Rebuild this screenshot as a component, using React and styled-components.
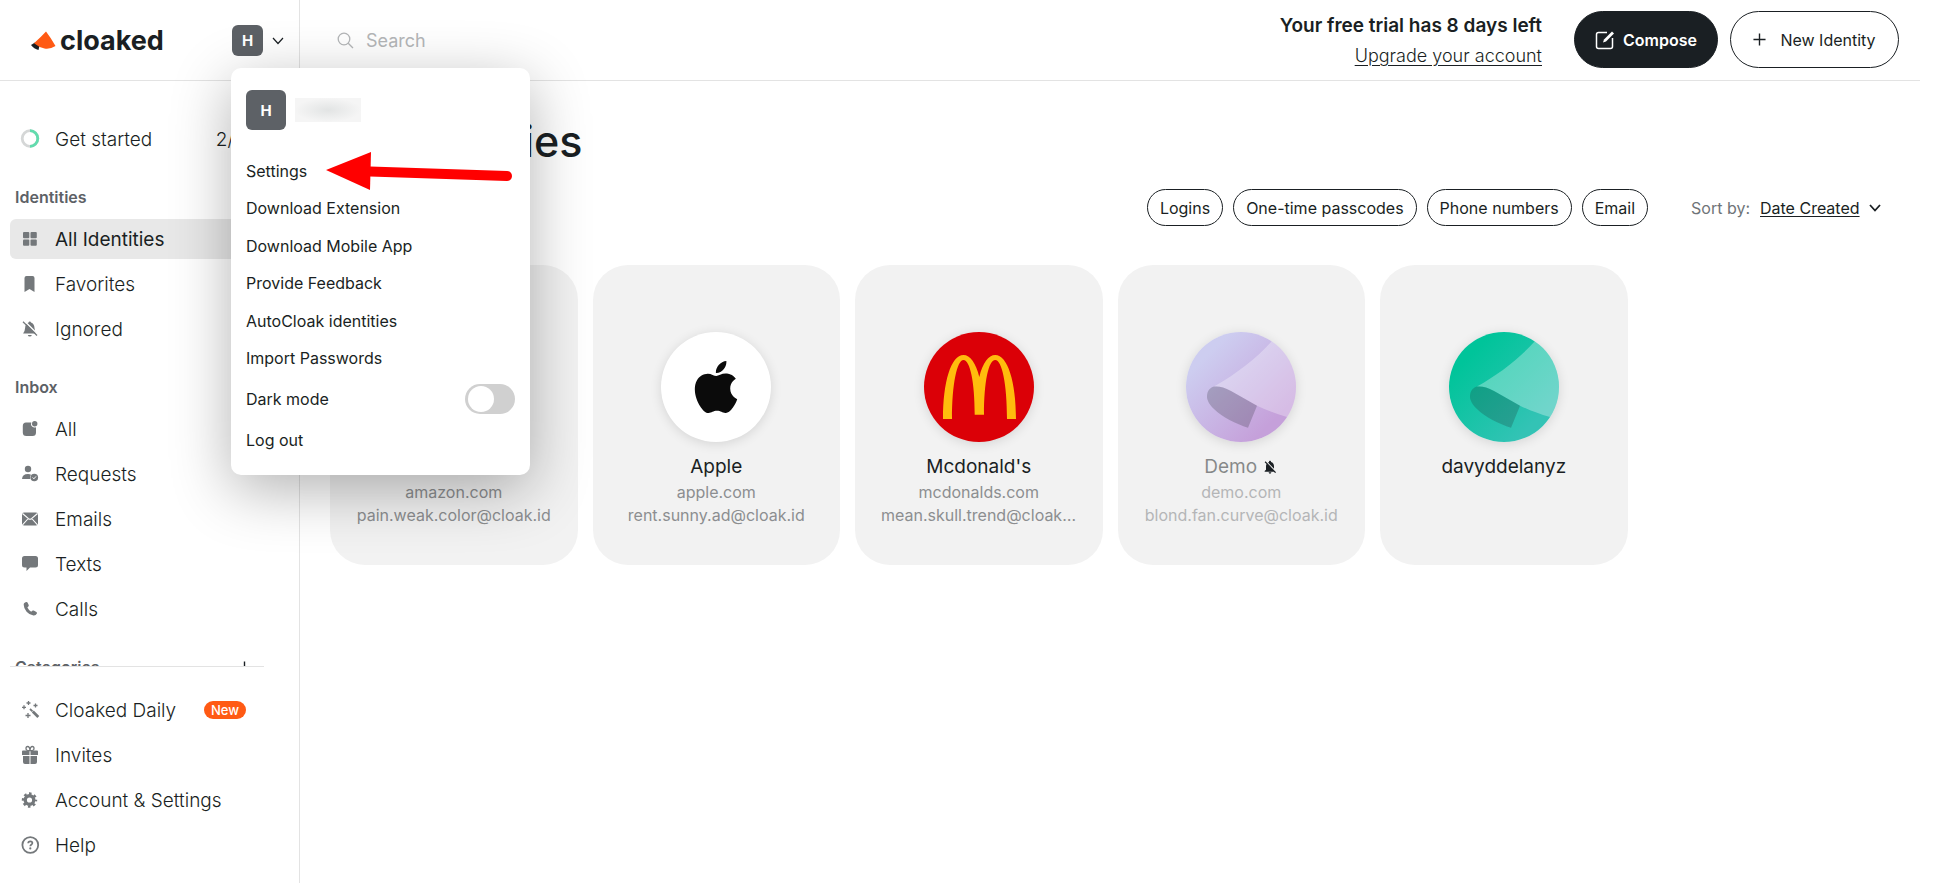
import { useState } from 'react';
import styled, { createGlobalStyle } from 'styled-components';
import { SiApple } from 'react-icons/si';
import { MdNotificationsOff } from 'react-icons/md';

const colors = {
  ink: '#1a1f23',
  gray: '#6f7478',
  line: '#e3e3e3',
  card: '#f2f2f2',
  orange: '#ff5a14',
  avatar: '#5d6166',
};

const GlobalStyle = createGlobalStyle`
  *, *::before, *::after {
    box-sizing: border-box;
  }

  body {
    margin: 0;
    background: #fff;
    color: ${colors.ink};
    font-family: Inter, "Open Sans", sans-serif;
  }

  button, input, select {
    font: inherit;
    color: inherit;
  }

  button {
    padding: 0;
    border: 0;
    background: none;
    cursor: pointer;
  }

  a {
    color: inherit;
    text-decoration: none;
  }
`;

const Page = styled.div`
  display: grid;
  grid-template-columns: 300px 1fr;
  height: calc(100vh - 11px);
  padding-right: 17px;
`;

/* sidebar */

const Sidebar = styled.aside`
  display: flex;
  flex-direction: column;
  min-height: 0;
  border-right: 1px solid ${colors.line};
`;

const SidebarHeader = styled.div`
  display: flex;
  flex: none;
  justify-content: space-between;
  height: 81px;
  padding: 25px 15px 0 31px;
  border-bottom: 1px solid ${colors.line};
`;

const Brand = styled.a`
  display: flex;
  align-items: center;
  gap: 4px;
  height: 32px;
  font-size: 27px;
  font-weight: 700;
  line-height: 32px;
`;

const Account = styled.div`
  position: relative;
`;

const AccountButton = styled.button`
  display: flex;
  align-items: center;
  gap: 9px;
`;

const Avatar = styled.span`
  display: grid;
  place-items: center;
  width: ${({ $size }) => $size}px;
  height: ${({ $size }) => $size}px;
  border-radius: 6px;
  background: ${colors.avatar};
  color: #fff;
  font-size: 15px;
  font-weight: 700;
`;

const SidebarScroll = styled.nav`
  flex: 1;
  min-height: 0;
  padding: 38px 35px 0 10px;
  overflow: hidden;
`;

const SidebarFooter = styled.nav`
  flex: none;
  margin: 0 35px 0 10px;
  padding: 23px 0 18px;
  border-top: 1px solid ${colors.line};
`;

const SectionTitle = styled.h2`
  display: flex;
  justify-content: space-between;
  align-items: center;
  height: 24px;
  margin: 26px 0 10px;
  padding: 0 13px 0 5px;
  color: ${colors.avatar};
  font-size: 16px;
  font-weight: 600;

  button {
    display: flex;
    color: ${colors.ink};
  }
`;

const NavList = styled.ul`
  display: grid;
  gap: 5px;
  margin: 0;
  padding: 0;
  list-style: none;
`;

const NavItem = styled.a`
  display: flex;
  align-items: center;
  gap: 15px;
  height: 40px;
  padding: 0 18px 0 10px;
  border-radius: 6px;
  background: ${({ $active }) => ($active ? '#e8e8e8' : 'transparent')};
  font-size: 19px;
  font-weight: ${({ $active }) => ($active ? 400 : 300)};
  white-space: nowrap;

  svg {
    flex: none;
    color: #74787b;
  }

  .count {
    margin-left: auto;
  }
`;

const Badge = styled.span`
  width: 42px;
  height: 18px;
  margin-left: auto;
  border-radius: 9px;
  background: ${colors.orange};
  color: #fff;
  font-size: 13px;
  font-weight: 500;
  line-height: 18px;
  text-align: center;
`;

/* account menu */

const Menu = styled.div`
  position: absolute;
  z-index: 10;
  top: 43px;
  left: -1px;
  width: 299px;
  padding: 22px 15px 16px;
  border-radius: 10px;
  background: #fff;
  box-shadow: 0 15px 60px rgba(0, 0, 0, 0.3);
  font-size: 16px;
`;

const MenuUser = styled.div`
  display: flex;
  align-items: center;
  gap: 9px;
  margin-bottom: 22px;
`;

const HiddenName = styled.span`
  width: 66px;
  height: 24px;
  background: radial-gradient(closest-side, #e2e4e4, #f5f5f5);
`;

const MenuList = styled.div`
  display: grid;
  grid-template-rows: repeat(6, 1fr);
  height: 225px;
`;

const MenuItem = styled.a`
  position: relative;
  display: flex;
  align-items: center;
`;

const DarkMode = styled.label`
  display: flex;
  justify-content: space-between;
  align-items: center;
  height: 44px;
`;

const LogOut = styled.button`
  display: block;
  height: 38px;
`;

const Toggle = styled.input`
  appearance: none;
  display: flex;
  width: 50px;
  height: 30px;
  margin: 0;
  padding: 2px 3px;
  border-radius: 15px;
  background: #d0d0d0;

  &::before {
    content: '';
    width: 26px;
    height: 26px;
    border-radius: 50%;
    background: #fff;
  }

  &:checked {
    justify-content: flex-end;
    background: ${colors.ink};
  }
`;

const Arrow = styled.svg`
  position: absolute;
  top: -2px;
  left: 78px;
`;

/* main column */

const Main = styled.main`
  min-width: 0;
`;

const TopBar = styled.header`
  display: flex;
  align-items: flex-start;
  height: 81px;
  padding: 11px 21px 0 37px;
  border-bottom: 1px solid ${colors.line};
`;

const SearchBox = styled.label`
  display: flex;
  flex: 1;
  align-items: center;
  gap: 12px;
  height: 58px;
  color: #b4b6b8;

  input {
    width: 300px;
    border: 0;
    outline: 0;
    padding: 0;
    background: none;
    font-size: 18px;
  }

  input::placeholder {
    color: #b4b6b8;
  }
`;

const Trial = styled.div`
  display: grid;
  justify-items: end;
  margin-right: 32px;
  font-size: 18px;
  line-height: 30px;

  strong {
    font-size: 19px;
    font-weight: 600;
  }

  a {
    font-weight: 300;
    text-decoration: underline;
    text-underline-offset: 3px;
  }
`;

const HeaderButton = styled.button`
  display: flex;
  align-items: center;
  justify-content: center;
  gap: ${({ $primary }) => ($primary ? 8 : 14)}px;
  width: ${({ $primary }) => ($primary ? 144 : 169)}px;
  height: 57px;
  margin-left: ${({ $primary }) => ($primary ? 0 : 12)}px;
  border: 1px solid ${colors.ink};
  border-radius: 29px;
  background: ${({ $primary }) => ($primary ? colors.ink : '#fff')};
  color: ${({ $primary }) => ($primary ? '#fff' : colors.ink)};
  font-size: 16px;
  font-weight: ${({ $primary }) => ($primary ? 600 : 400)};
`;

const Content = styled.section`
  padding: 30px;

  h1 {
    margin: 0;
    font-size: 43px;
    font-weight: 500;
    line-height: 60px;
  }
`;

const Filters = styled.div`
  display: flex;
  justify-content: flex-end;
  align-items: center;
  gap: 10px;
  margin: 18px 0 39px;
  padding-right: 9px;
`;

const Pill = styled.button`
  height: 37px;
  padding: 0 12px;
  border: 1px solid ${colors.ink};
  border-radius: 19px;
  background: #fff;
  font-size: 16px;
`;

const Sort = styled.label`
  display: flex;
  align-items: center;
  margin-left: 33px;
  color: ${colors.gray};
  font-size: 16px;

  select {
    appearance: none;
    margin: 0 9px 0 10px;
    padding: 0;
    border: 0;
    background: none;
    color: ${colors.ink};
    text-decoration: underline;
    text-underline-offset: 2px;
  }

  svg {
    color: ${colors.ink};
  }
`;

const Cards = styled.div`
  display: grid;
  grid-template-columns: repeat(6, 1fr);
  gap: 15px;
`;

const Card = styled.article`
  display: flex;
  flex-direction: column;
  align-items: center;
  min-width: 0;
  height: 300px;
  padding: 67px 26px 0;
  border-radius: 35px;
  background: ${colors.card};
  text-align: center;

  h3 {
    display: flex;
    align-items: center;
    gap: 5px;
    margin: 11px 0 0;
    font-size: 19px;
    font-weight: 400;
    line-height: 28px;
  }

  h3 span {
    opacity: ${({ $muted }) => ($muted ? 0.5 : 1)};
  }

  p {
    width: 100%;
    margin: 0;
    overflow: hidden;
    color: #8c8e90;
    font-size: 16px;
    line-height: 23px;
    text-overflow: ellipsis;
    white-space: nowrap;
    opacity: ${({ $muted }) => ($muted ? 0.6 : 1)};
  }
`;

const CardLogo = styled.div`
  display: grid;
  flex: none;
  place-items: center;
  width: 110px;
  height: 110px;
  border-radius: 50%;
  overflow: hidden;
  background: ${({ $bg }) => $bg};
  box-shadow: 0 2px 12px rgba(0, 0, 0, 0.12);
`;

/* drawings */

const LogoMark = () => (
  <svg width="25" height="20" viewBox="0 0 25 20">
    <path d="M0 14 L4 11.5 L8.5 14.5 L7.5 19 Q3 18 0 14Z" fill={colors.ink} />
    <path
      d="M15 0.5 Q20 7 24.5 15 Q19 18.5 13.5 17.5 Q8 16.5 3 12.3 Q9.5 6.5 15 0.5Z"
      fill={colors.orange}
    />
  </svg>
);

const Chevron = ({ width = 1.2 }) => (
  <svg width="12" height="8" viewBox="0 0 12 8" fill="none" stroke="currentColor" strokeWidth={width}>
    <path d="M1 1 L6 6.5 L11 1" />
  </svg>
);

const Plus = ({ size }) => (
  <svg width={size} height={size} viewBox="0 0 14 14" fill="none" stroke="currentColor" strokeWidth="1.5">
    <path d="M7 0.5 V13.5 M0.5 7 H13.5" />
  </svg>
);

const Icon = ({ children }) => (
  <svg width="20" height="20" viewBox="0 0 20 20" fill="currentColor">
    {children}
  </svg>
);

const icons = {
  started: (
    <g fill="none" strokeWidth="2.8">
      <circle cx="10" cy="9.5" r="7.8" stroke="#d5d7d7" />
      <path d="M10 1.7 A7.8 7.8 0 0 1 10 17.3" stroke="#62dcae" />
    </g>
  ),
  all: (
    <>
      <rect x="3" y="3" width="6.3" height="6.3" rx="1" />
      <rect x="10.5" y="3" width="6.3" height="6.3" rx="1" />
      <rect x="3" y="10.5" width="6.3" height="6.3" rx="1" />
      <rect x="10.5" y="10.5" width="6.3" height="6.3" rx="1" />
    </>
  ),
  bookmark: <path d="M4.5 4 Q4.5 2 6.5 2 H12.5 Q14.5 2 14.5 4 V18 L9.5 15 L4.5 18Z" />,
  ignored: (
    <>
      <path d="M9.8 2.5 Q10.8 2.5 11 3.6 Q14.3 4.8 14.5 9 Q14.6 12 16.5 14.5 H3.1 Q5 12 5.1 9 Q5.3 4.8 8.6 3.6 Q8.8 2.5 9.8 2.5Z" />
      <path d="M7.8 16 H11.8 Q11.5 17.6 9.8 17.6 Q8.1 17.6 7.8 16Z" />
      <path d="M4.5 2 L18.5 16" stroke="#fff" strokeWidth="1.4" />
      <path d="M3 2.7 L17 16.5" stroke="currentColor" strokeWidth="1.2" />
    </>
  ),
  inbox: (
    <>
      <path d="M6 3.5 H11.3 A3.6 3.6 0 0 0 16 8.2 V13.5 Q16 17 12.5 17 H6.3 Q2.8 17 2.8 13.5 V7 Q2.8 3.5 6 3.5Z" />
      <circle cx="14.7" cy="4.8" r="2.7" />
    </>
  ),
  requests: (
    <>
      <circle cx="8" cy="5" r="3.2" />
      <path d="M2 15 Q2.4 10 8 10 Q10 10 11 10.7 Q9.5 12.5 10.3 15Z" />
      <circle cx="14.3" cy="13.5" r="3.8" />
      <path d="M12.7 13.5 L13.9 14.8 L16 12.4" fill="none" stroke="#fff" strokeWidth="1" />
    </>
  ),
  emails: (
    <>
      <rect x="2" y="3.5" width="16" height="13" rx="2" />
      <path
        d="M2.5 4.5 L8.5 9.7 Q10 10.9 11.5 9.7 L17.5 4.5 M2.5 15.8 L7.8 10 M17.5 15.8 L12.2 10"
        fill="none"
        stroke="#fff"
        strokeWidth="1.1"
      />
    </>
  ),
  texts: (
    <path d="M4.5 2 H15.5 Q18 2 18 4.5 V11 Q18 13.5 15.5 13.5 H10 L6.5 17 V13.5 H4.5 Q2 13.5 2 11 V4.5 Q2 2 4.5 2Z" />
  ),
  calls: (
    <path d="M4.3 4 L6 3 Q7 2.6 7.5 3.6 L8.7 6 Q9 7 8.3 7.6 L7.4 8.5 Q8.7 11.3 11.2 12.7 L12.2 11.8 Q12.9 11.2 13.7 11.6 L16.4 13 Q17.3 13.6 16.9 14.5 Q15.8 16.7 13.5 16.5 Q9.5 16 6.6 12.7 Q3.7 9.3 3.7 5.8 Q3.6 4.5 4.3 4Z" />
  ),
  daily: (
    <g fill="none" stroke="currentColor" strokeWidth="1.3">
      <path d="M4 5.3 V9.3 M2 7.3 H6 M8.5 1 V5 M6.5 3 H10.5 M15.5 3.5 V7.5 M13.5 5.5 H17.5 M8 13 V18 M5.5 15.5 H10.5" />
      <path d="M10 9 L12.5 11.3" strokeWidth="1.8" />
      <path d="M12.8 11.6 L18.3 17" strokeWidth="2.8" />
    </g>
  ),
  invites: (
    <>
      <path
        d="M10 5.5 Q6 6 6 3.5 Q6 1.5 7.7 1.5 Q9.7 1.5 10 5.5 Q10.3 1.5 12.3 1.5 Q14 1.5 14 3.5 Q14 6 10 5.5Z"
        fill="none"
        stroke="currentColor"
        strokeWidth="1.3"
      />
      <path d="M3 5.5 H9.5 V10 H2 V6.5 Q2 5.5 3 5.5Z M10.5 5.5 H17 Q18 5.5 18 6.5 V10 H10.5Z" />
      <path d="M3 11 H9.5 V19 H5 Q3 19 3 17Z M10.5 11 H17 V17 Q17 19 15 19 H10.5Z" />
    </>
  ),
  settings: (
    <>
      <circle cx="9.5" cy="10" r="4.3" fill="none" stroke="currentColor" strokeWidth="3.4" />
      <circle cx="9.5" cy="10" r="6.5" fill="none" stroke="currentColor" strokeWidth="2.4" strokeDasharray="2.55 2.555" strokeDashoffset="1.275" />
    </>
  ),
  help: (
    <>
      <circle cx="10.3" cy="10" r="7.9" fill="none" stroke="currentColor" strokeWidth="1.8" />
      <path d="M8.2 8.3 Q8.2 6.3 10.3 6.3 Q12.4 6.3 12.4 8 Q12.4 9 11.2 9.7 Q10.3 10.3 10.3 11.3" fill="none" stroke="currentColor" strokeWidth="1.7" />
      <circle cx="10.3" cy="13.4" r="1.1" />
    </>
  ),
};

const CloakArt = () => (
  <svg width="110" height="110" viewBox="0 0 110 110">
    <path
      d="M28 54.5 C50 42 70 27 86 9 L115 9 L115 90 L101 85 C90 82 80 78 71 73.7 L45 59 C38 55 33 54 28 54.5Z"
      fill="#fff"
      opacity="0.3"
    />
    <path
      d="M28 54.5 C33 54 38 55 45 59 L71 73.7 L62 95.7 C50 92 36 85 28 77 C22 71 21 67 21 64.7 C21 59 24 55.5 28 54.5Z"
      fill="#1a1f23"
      opacity="0.22"
    />
  </svg>
);

const ArchesArt = () => (
  <svg width="110" height="110" viewBox="0 0 110 110">
    <path
      d="M19 87 C19 50 27 23 39.5 23 C46 23 52 31 55.3 45 C58.6 31 64.6 23 71.2 23 C83.7 23 92 50 92 87 H83 C83 52 78 28 71.2 28 C64.5 28 60 50 60 82.7 H50.7 C50.7 50 46 28 39.5 28 C33 28 28 52 28 87Z"
      fill="#ffbc0d"
    />
  </svg>
);

const identityLinks = [
  { icon: 'all', label: 'All Identities', active: true },
  { icon: 'bookmark', label: 'Favorites' },
  { icon: 'ignored', label: 'Ignored' },
];

const inboxLinks = [
  { icon: 'inbox', label: 'All' },
  { icon: 'requests', label: 'Requests' },
  { icon: 'emails', label: 'Emails' },
  { icon: 'texts', label: 'Texts' },
  { icon: 'calls', label: 'Calls' },
];

const footerLinks = [
  { icon: 'daily', label: 'Cloaked Daily', badge: 'New' },
  { icon: 'invites', label: 'Invites' },
  { icon: 'settings', label: 'Account & Settings' },
  { icon: 'help', label: 'Help' },
];

const menuLinks = [
  'Settings',
  'Download Extension',
  'Download Mobile App',
  'Provide Feedback',
  'AutoCloak identities',
  'Import Passwords',
];

const filters = ['Logins', 'One-time passcodes', 'Phone numbers', 'Email'];

const identities = [
  { name: 'Amazon', site: 'amazon.com', email: 'pain.weak.color@cloak.id', bg: '#fff' },
  {
    name: 'Apple',
    site: 'apple.com',
    email: 'rent.sunny.ad@cloak.id',
    bg: '#fff',
    art: <SiApple size={52} color="#0b0b0b" />,
  },
  {
    name: "Mcdonald's",
    site: 'mcdonalds.com',
    email: 'mean.skull.trend@cloak.id',
    bg: '#db0007',
    art: <ArchesArt />,
  },
  {
    name: 'Demo',
    site: 'demo.com',
    email: 'blond.fan.curve@cloak.id',
    bg: 'linear-gradient(135deg, #cdcdf0 20%, #c5a0da 80%)',
    art: <CloakArt />,
    muted: true,
  },
  {
    name: 'davyddelanyz',
    bg: 'linear-gradient(135deg, #00c49a 20%, #33c3b5 80%)',
    art: <CloakArt />,
  },
];

const Links = ({ items }) => (
  <NavList>
    {items.map(({ icon, label, active, count, badge }) => (
      <li key={label}>
        <NavItem href="#" $active={active}>
          <Icon>{icons[icon]}</Icon>
          {label}
          {count && <span className="count">{count}</span>}
          {badge && <Badge>{badge}</Badge>}
        </NavItem>
      </li>
    ))}
  </NavList>
);

const AccountMenu = () => (
  <Menu>
    <MenuUser>
      <Avatar $size={40}>H</Avatar>
      <HiddenName />
    </MenuUser>
    <MenuList>
      {menuLinks.map((label, i) => (
        <MenuItem href="#" key={label}>
          {label}
          {i === 0 && (
            <Arrow width="192" height="44" viewBox="0 0 192 44">
              <path d="M46 21.5 L183 26" stroke="#f00" strokeWidth="10" strokeLinecap="round" />
              <path d="M2 20 L47 2 L46 40Z" fill="#f00" />
            </Arrow>
          )}
        </MenuItem>
      ))}
    </MenuList>
    <DarkMode>
      Dark mode
      <Toggle type="checkbox" />
    </DarkMode>
    <LogOut>Log out</LogOut>
  </Menu>
);

const App = () => {
  const [open, setOpen] = useState(true);

  return (
    <Page>
      <GlobalStyle />
      <Sidebar>
        <SidebarHeader>
          <Brand href="#">
            <LogoMark />
            cloaked
          </Brand>
          <Account>
            <AccountButton onClick={() => setOpen(!open)}>
              <Avatar $size={31}>H</Avatar>
              <Chevron />
            </AccountButton>
            {open && <AccountMenu />}
          </Account>
        </SidebarHeader>
        <SidebarScroll>
          <Links items={[{ icon: 'started', label: 'Get started', count: '2/4' }]} />
          <SectionTitle>Identities</SectionTitle>
          <Links items={identityLinks} />
          <SectionTitle>Inbox</SectionTitle>
          <Links items={inboxLinks} />
          <SectionTitle>
            Categories
            <button aria-label="Add category">
              <Plus size={13} />
            </button>
          </SectionTitle>
        </SidebarScroll>
        <SidebarFooter>
          <Links items={footerLinks} />
        </SidebarFooter>
      </Sidebar>
      <Main>
        <TopBar>
          <SearchBox>
            <svg width="17" height="17" viewBox="0 0 17 17" fill="none" stroke="currentColor" strokeWidth="1.3">
              <circle cx="7" cy="7" r="5.8" />
              <path d="M11.2 11.2 L16 16" />
            </svg>
            <input type="search" placeholder="Search" />
          </SearchBox>
          <Trial>
            <strong>Your free trial has 8 days left</strong>
            <a href="#">Upgrade your account</a>
          </Trial>
          <HeaderButton $primary>
            <svg width="20" height="20" viewBox="0 0 20 20" fill="none" stroke="currentColor" strokeWidth="1.5">
              <path d="M12 2.5 H3.5 Q1.5 2.5 1.5 4.5 V16.5 Q1.5 18.5 3.5 18.5 H15.5 Q17.5 18.5 17.5 16.5 V8" />
              <path d="M8 12.5 L9 9.5 L17 1.5 L19 3.5 L11 11.5Z" fill="currentColor" stroke="none" />
            </svg>
            Compose
          </HeaderButton>
          <HeaderButton>
            <Plus size={13} />
            New Identity
          </HeaderButton>
        </TopBar>
        <Content>
          <h1>All Identities</h1>
          <Filters>
            {filters.map((label) => (
              <Pill key={label}>{label}</Pill>
            ))}
            <Sort>
              Sort by:
              <select>
                <option>Date Created</option>
              </select>
              <Chevron width={1.8} />
            </Sort>
          </Filters>
          <Cards>
            {identities.map(({ name, site, email, bg, art, muted }) => (
              <Card key={name} $muted={muted}>
                <CardLogo $bg={bg}>{art}</CardLogo>
                <h3>
                  <span>{name}</span>
                  {muted && <MdNotificationsOff size={16} />}
                </h3>
                {site && <p>{site}</p>}
                {email && <p>{email}</p>}
              </Card>
            ))}
          </Cards>
        </Content>
      </Main>
    </Page>
  );
};

export default App;
